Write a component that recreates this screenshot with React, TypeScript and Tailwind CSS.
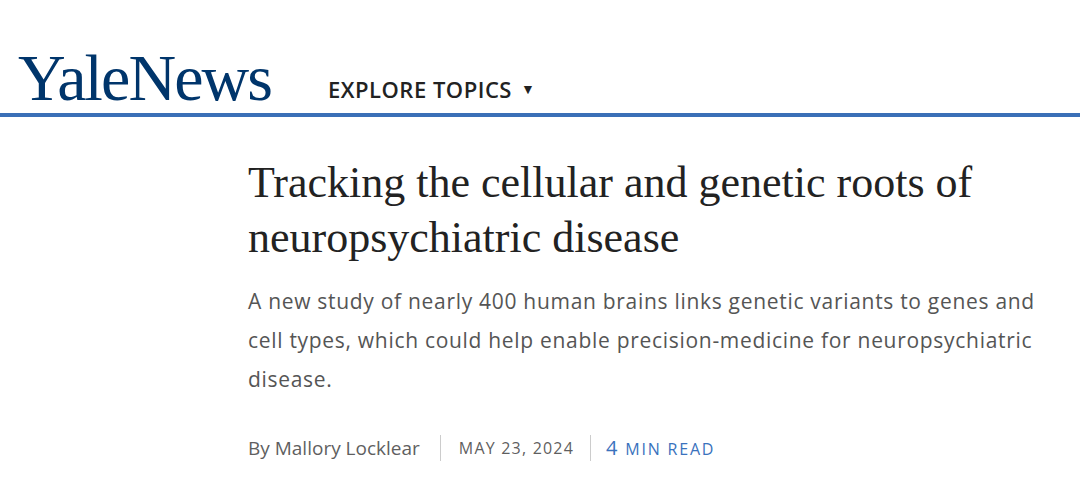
import React from "react";

export default function App() {
  return (
    <div className="w-[1080px] h-[485px] bg-white overflow-hidden">
      <header className="h-[113px] flex items-end pl-[18px]">
        <div
          className="text-[#00356b] text-[66px] leading-none pb-[2px] tracking-[-1.9px]"
          style={{ fontFamily: '"Liberation Serif", "Times New Roman", serif' }}
        >
          YaleNews
        </div>
        <div
          className="ml-[57px] pb-[13px] flex items-center text-[#222] text-[22px] leading-none tracking-[0.5px]"
          style={{ fontFamily: '"Open Sans", sans-serif', fontWeight: 600 }}
        >
          EXPLORE TOPICS
          <span className="ml-[9px] text-[14px]">▼</span>
        </div>
      </header>
      <div className="h-[4px] bg-[#3a6fb7]" />
      <main className="pl-[248px] pr-[40px] pt-[38px]">
        <h1
          className="text-[#222] text-[44px] leading-[55px] w-[760px]"
          style={{ fontFamily: '"Liberation Serif", "Times New Roman", serif' }}
        >
          Tracking the cellular and genetic roots of neuropsychiatric disease
        </h1>
        <p
          className="mt-[17px] text-[#555] text-[21px] leading-[39px] tracking-[0.7px] w-[800px]"
          style={{ fontFamily: '"Open Sans", sans-serif' }}
        >
          A new study of nearly 400 human brains links genetic variants to genes and cell types, which could help enable precision-medicine for neuropsychiatric disease.
        </p>
        <div
          className="mt-[36px] flex items-center text-[19px] leading-none"
          style={{ fontFamily: '"Open Sans", sans-serif' }}
        >
          <span className="text-[#5f5f5f]">By Mallory Locklear</span>
          <span className="ml-[20px] mr-[18px] w-px h-[26px] bg-[#ccc]" />
          <span className="text-[#5f5f5f] text-[16px] tracking-[1.2px]">MAY 23, 2024</span>
          <span className="ml-[16px] mr-[15px] w-px h-[26px] bg-[#ccc]" />
          <span className="text-[#3a72bd] text-[16px] tracking-[1.8px]">
            <span className="text-[20px]">4</span> MIN READ
          </span>
        </div>
      </main>
    </div>
  );
}
